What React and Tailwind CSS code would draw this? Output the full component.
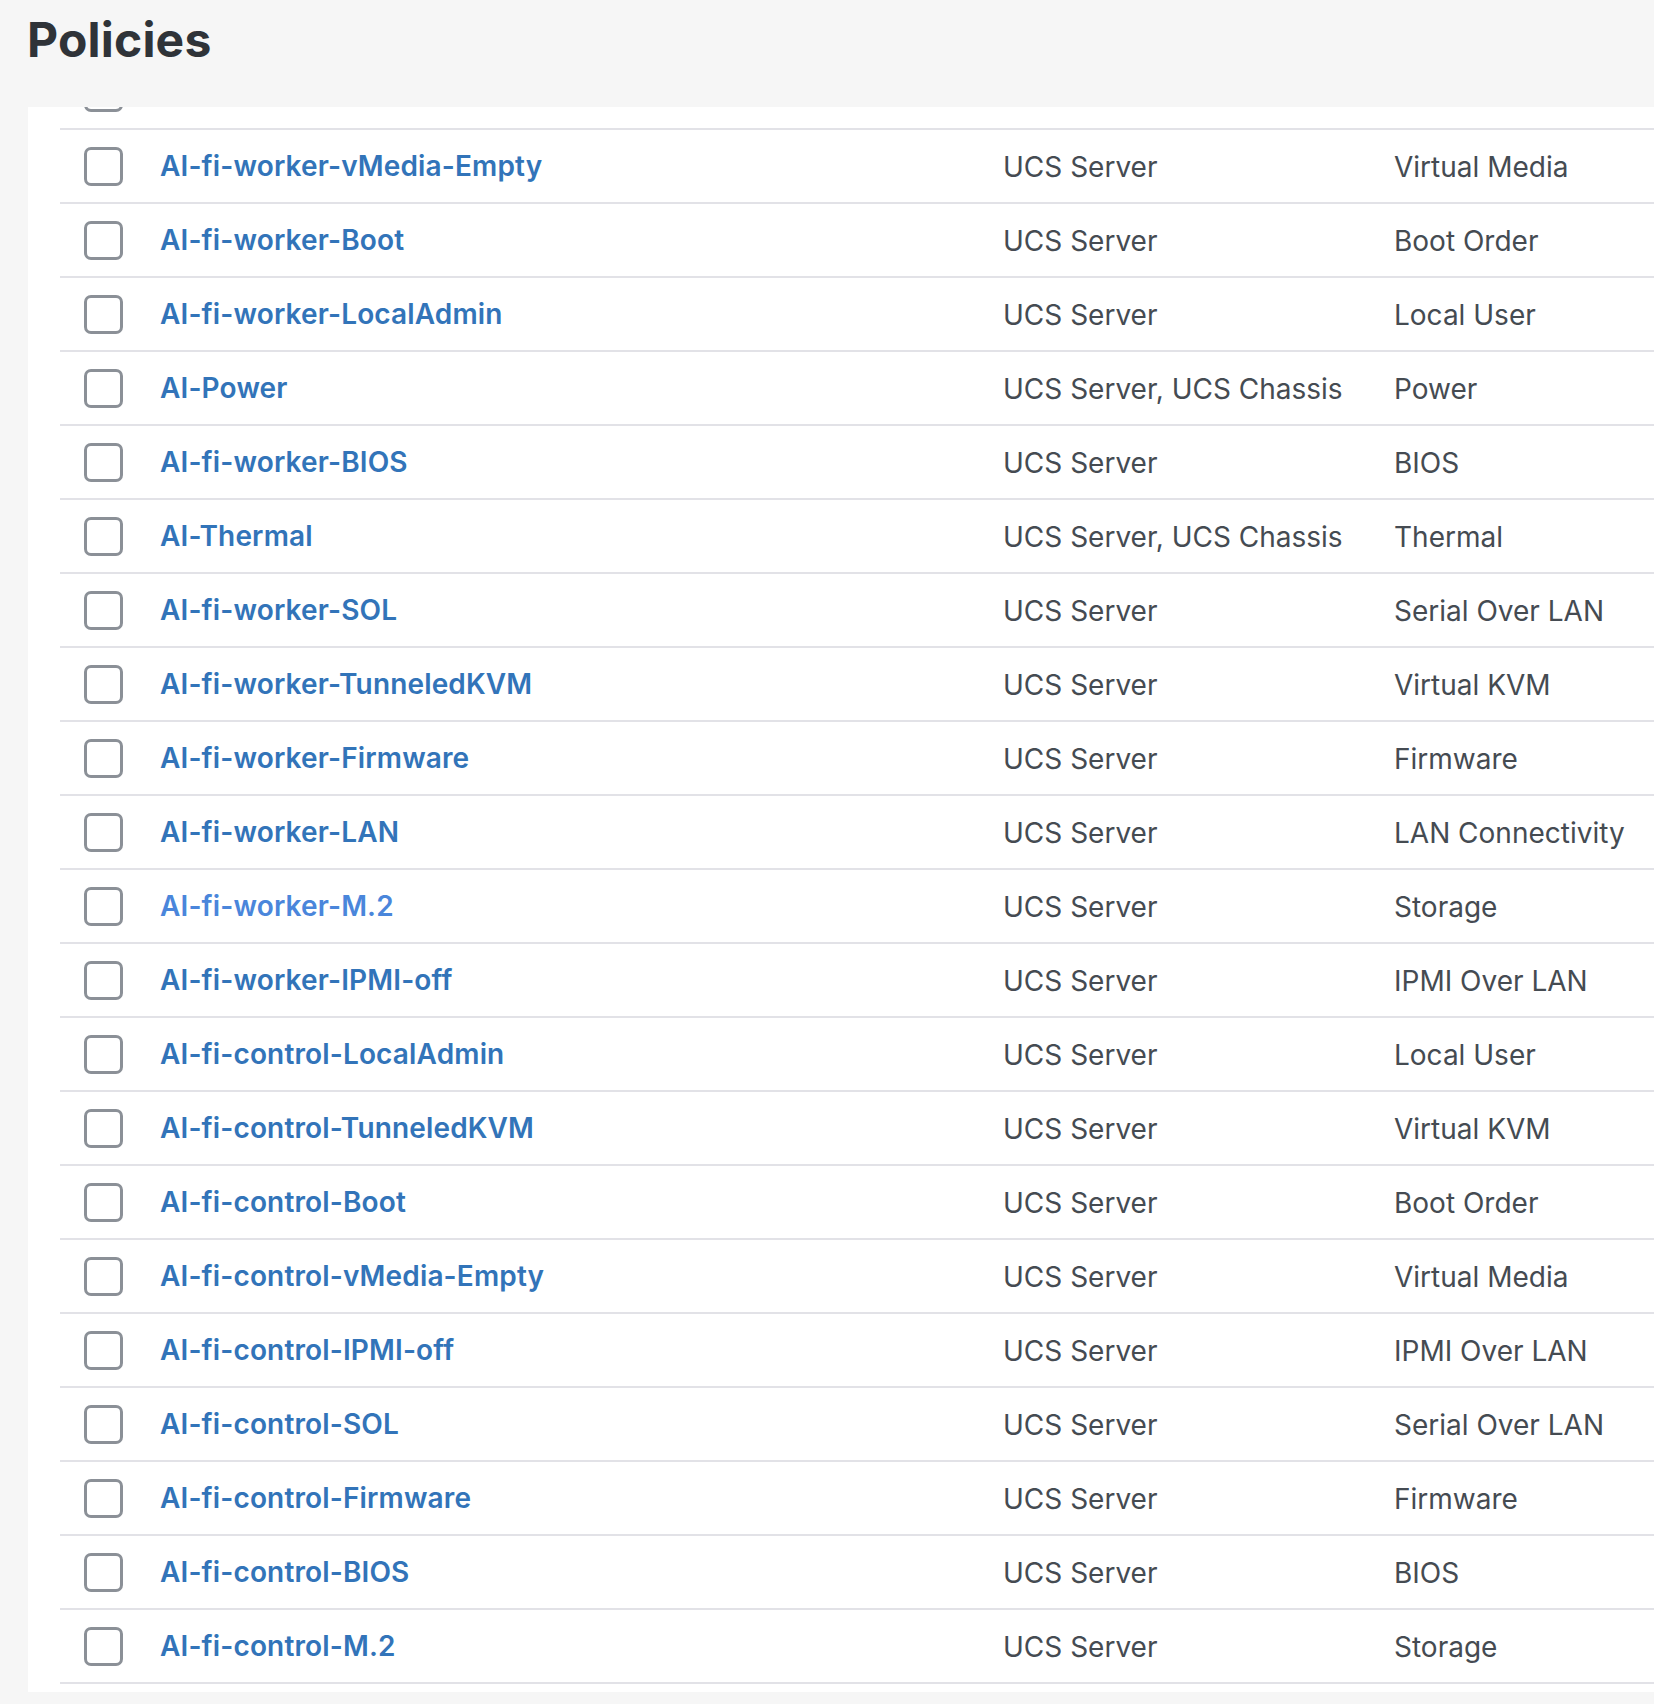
import React from "react";

const rows = [
  ["AI-fi-worker-vMedia-Empty", "UCS Server", "Virtual Media"],
  ["AI-fi-worker-Boot", "UCS Server", "Boot Order"],
  ["AI-fi-worker-LocalAdmin", "UCS Server", "Local User"],
  ["AI-Power", "UCS Server, UCS Chassis", "Power"],
  ["AI-fi-worker-BIOS", "UCS Server", "BIOS"],
  ["AI-Thermal", "UCS Server, UCS Chassis", "Thermal"],
  ["AI-fi-worker-SOL", "UCS Server", "Serial Over LAN"],
  ["AI-fi-worker-TunneledKVM", "UCS Server", "Virtual KVM"],
  ["AI-fi-worker-Firmware", "UCS Server", "Firmware"],
  ["AI-fi-worker-LAN", "UCS Server", "LAN Connectivity"],
  ["AI-fi-worker-M.2", "UCS Server", "Storage", true],
  ["AI-fi-worker-IPMI-off", "UCS Server", "IPMI Over LAN"],
  ["AI-fi-control-LocalAdmin", "UCS Server", "Local User"],
  ["AI-fi-control-TunneledKVM", "UCS Server", "Virtual KVM"],
  ["AI-fi-control-Boot", "UCS Server", "Boot Order"],
  ["AI-fi-control-vMedia-Empty", "UCS Server", "Virtual Media"],
  ["AI-fi-control-IPMI-off", "UCS Server", "IPMI Over LAN"],
  ["AI-fi-control-SOL", "UCS Server", "Serial Over LAN"],
  ["AI-fi-control-Firmware", "UCS Server", "Firmware"],
  ["AI-fi-control-BIOS", "UCS Server", "BIOS"],
  ["AI-fi-control-M.2", "UCS Server", "Storage"],
];

function Row({ name, target, type, hover }) {
  return (
    <div className="flex h-[74px] items-center border-b-2 border-[#e2e2e7] pl-6">
      <div className="h-[39px] w-[39px] shrink-0 rounded-[7px] border-[3px] border-[#8b9097] bg-white" />
      <div className="ml-[37px] w-[843px] shrink-0 pt-[2px]">
        <span
          className={
            "text-[28px] font-semibold leading-none tracking-[0.15px] " +
            (hover ? "text-[#4a86db]" : "text-[#3274b9]")
          }
        >
          {name}
        </span>
      </div>
      <div className="w-[391px] shrink-0 whitespace-nowrap pt-[2px] text-[28px] leading-none text-[#454b52]">
        {target}
      </div>
      <div className="whitespace-nowrap pt-[2px] text-[28px] leading-none text-[#454b52]">{type}</div>
    </div>
  );
}

export default function App() {
  return (
    <div
      className="min-h-[1704px] w-full overflow-hidden bg-[#f6f6f6] pb-3"
      style={{ fontFamily: "Inter, 'Noto Sans', sans-serif" }}
    >
      <div className="h-[107px] pl-[27px] pt-[11px]">
        <h1 className="text-[48px] font-bold leading-[58px] tracking-[0.2px] text-[#2f3338]">
          Policies
        </h1>
      </div>
      <div className="ml-[28px] overflow-hidden bg-white pb-2 pl-8">
        <div className="-mt-[51px]">
          <Row name="" target="" type="" />
          {rows.map((r, i) => (
            <Row key={i} name={r[0]} target={r[1]} type={r[2]} hover={r[3]} />
          ))}
        </div>
      </div>
    </div>
  );
}
